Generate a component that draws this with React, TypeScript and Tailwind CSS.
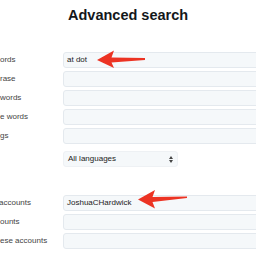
import React from "react";

const Field = ({ label, value, ml = 0 }: { label: string; value?: string; ml?: number }) => (
  <div className="flex items-center h-[16px]">
    <div className="w-[63px] shrink-0 overflow-hidden whitespace-nowrap text-[8px] text-[#444]">
      <span style={{ marginLeft: ml }}>{label}</span>
    </div>
    <div className="h-[16px] w-[200px] shrink-0 rounded-[3px] border border-[#e4e9ee] bg-[#f5f8fa] pl-[3px] text-[8px] leading-[14px] text-[#222]">
      {value}
    </div>
  </div>
);

export default function App() {
  return (
    <div className="relative w-[256px] h-[256px] overflow-hidden bg-white" style={{ fontFamily: '"Liberation Sans", Arial, sans-serif' }}>
      <div className="pt-[7px] pl-[68px] text-[14.5px] leading-[16px] font-bold text-[#14171a]">Advanced search</div>
      <div className="mt-[29px] flex flex-col gap-[3px]">
        <Field label="ords" value="at dot" />
        <Field label="rase" />
        <Field label="words" />
        <Field label="e words" />
        <Field label="gs" />
        <div className="flex items-center h-[16px] mt-[4px]">
          <div className="w-[63px] shrink-0" />
          <div className="relative h-[16px] w-[115px] rounded-[3px] border border-[#eef1f4] bg-[#f5f8fa] pl-[4px] text-[8px] leading-[14px] text-[#222]">
            All languages
            <svg className="absolute right-[4px] top-[4px]" width="4" height="7" viewBox="0 0 4 7">
              <path d="M0 3 L2 0 L4 3 Z" fill="#444" />
              <path d="M0 4 L2 7 L4 4 Z" fill="#444" />
            </svg>
          </div>
        </div>
        <div className="mt-[25px] flex flex-col gap-[3px]">
          <Field label="accounts" value="JoshuaCHardwick" ml={-1} />
          <Field label="ounts" />
          <Field label="ese accounts" />
        </div>
      </div>
      <svg className="absolute left-0 top-0" width="256" height="256" viewBox="0 0 256 256">
        <path d="M97 60 L114 50.5 L111.5 57.5 L145 58 L145 60 L111.5 62.5 L114 68 Z" fill="#ec3323" />
        <path d="M138 199.5 L155 190 L152.5 197 L187 196.5 L187 198 L152.5 202 L155 208.5 Z" fill="#ec3323" />
      </svg>
    </div>
  );
}
